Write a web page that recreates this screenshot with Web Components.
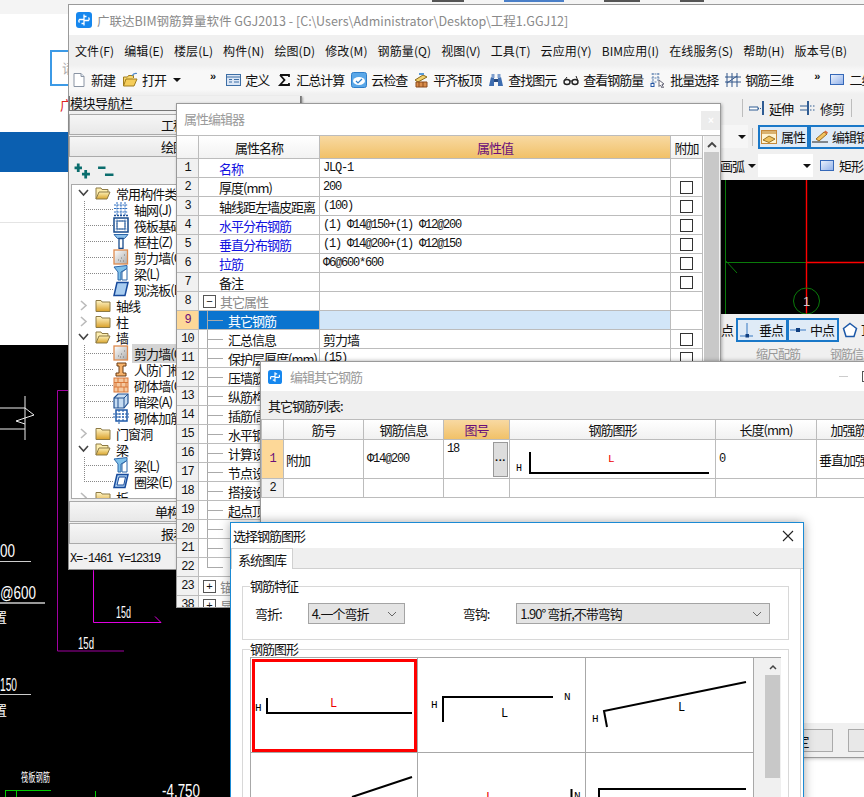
<!DOCTYPE html>
<html lang="zh">
<head>
<meta charset="utf-8">
<title>GGJ2013</title>
<style>
  body { margin: 0; background: #fff; font-family: "Noto Sans CJK SC", "Liberation Sans", sans-serif; font-size: 12px; color: #111; }
</style>
</head>
<body>
<ggj-desk>
  <web-page></web-page>
  <cad-canvas></cad-canvas>
  <main-window></main-window>
  <nav-panel></nav-panel>
  <prop-editor></prop-editor>
  <rebar-dialog></rebar-dialog>
  <shape-dialog></shape-dialog>
</ggj-desk>

<script>
const ICONS = {
  logo: `<rect x="0" y="0" width="16" height="16" rx="3" fill="#1687ee"/><path d="M8 2.500v5H3.500a2 2 0 0 0 0 3M8 13.500v-5h4.500a2 2 0 0 0 0-3M8 4.500h2.500M8 11.500H5.500" fill="none" stroke="#fff" stroke-width="1.300"/>`,
  doc: `<path d="M3 1.500h7l3 3v10H3z" fill="#fff" stroke="#8a94a3"/><path d="M10 1.500v3h3" fill="#dfe6ef" stroke="#8a94a3"/>`,
  open: `<path d="M1.500 14V5h4l1-1.500h5V6" fill="#f7d76f" stroke="#a07c1e"/><path d="M1.500 14l2.500-7h11l-3 7z" fill="#f5cd5a" stroke="#a07c1e"/><path d="M10 4c1-2 3-3 5-2.500" fill="none" stroke="#4b86c8" stroke-width="1.200"/>`,
  define: `<rect x="1.500" y="2.500" width="14" height="11" fill="#dbe6f5" stroke="#3d6ea5"/><path d="M1.500 5h14M4 7.500h3M4 10h3M9 7.500h5M9 10h5" stroke="#3d6ea5"/>`,
  sigma: `<path d="M4 3h9v2M4 3l4.500 5L4 13h9v-2" fill="none" stroke="#111" stroke-width="1.800"/>`,
  cloud: `<rect x="0.500" y="0.500" width="15" height="15" rx="2" fill="#5aa7e8" stroke="#2f7ec9"/><ellipse cx="8" cy="9" rx="6" ry="4" fill="#fff"/><path d="M5 9l2 2 4-4" fill="none" stroke="#2f7ec9" stroke-width="1.200"/>`,
  level: `<path d="M2 8l8-5 4 2-9 5z" fill="#f2d06b" stroke="#8a6a1d"/><path d="M3 10h11v5H3z" fill="#d98c4a" stroke="#8a4a1d"/><path d="M6 10v5M10 10v5" stroke="#8a4a1d"/><rect x="6" y="1" width="5" height="2" fill="#5a9ad5"/>`,
  binoc: `<path d="M3 5l-2 9h5V6zM13 5l2 9h-5V6z" fill="#3e6db0"/><rect x="3.500" y="2" width="3" height="4" fill="#7f9fce"/><rect x="9.500" y="2" width="3" height="4" fill="#7f9fce"/><rect x="6" y="7" width="4" height="3" fill="#28497d"/>`,
  glasses: `<ellipse cx="4" cy="10" rx="3" ry="2.500" fill="none" stroke="#222" stroke-width="1.400"/><ellipse cx="12" cy="10" rx="3" ry="2.500" fill="none" stroke="#222" stroke-width="1.400"/><path d="M7 9h2M1 9l3-4M15 9l-2-5" stroke="#222"/>`,
  batch: `<path d="M1.500 2h9M1.500 6h9M1.500 10h6M3 1v13M8 1v8" stroke="#5a7fae" stroke-dasharray="2 1" fill="none"/><rect x="1" y="11.500" width="3" height="3" fill="#fff" stroke="#2456a5"/><path d="M9 8l5 4-2 .5 1.500 3-1.500.5-1.500-3-1.500 1.500z" fill="#fff" stroke="#667"/>`,
  rebar3d: `<path d="M2 1v14M7 1v14M12 1v14M0 5h16M0 10h16M2 11l10-7" stroke="#33578a" fill="none"/>`,
  rect2d: `<defs><linearGradient id="r" x1="0" y1="0" x2="1" y2="1"><stop offset="0" stop-color="#eef3fc"/><stop offset="1" stop-color="#8fb0ea"/></linearGradient></defs><rect x="1.500" y="2.500" width="13" height="10" fill="url(#r)" stroke="#3568b8"/>`,
  extend: `<path d="M0 7h9v3H0z" fill="#fff" stroke="#2f5c93"/><path d="M11 8.500h1M9 8.500h1" stroke="#2f5c93"/><rect x="13" y="1" width="2" height="14" fill="#2f5c93"/>`,
  trim: `<path d="M0 6h7M0 10h7M10 6h1.500M13 6h1.500M10 10h1.500M13 10h1.500" stroke="#2f5c93"/><rect x="7" y="1" width="2" height="14" fill="#2f5c93"/>`,
  attr: `<rect x="0.500" y="1.500" width="15" height="13" fill="#fff3d0" stroke="#c78a3a"/><rect x="1" y="2" width="14" height="3" fill="#d9b26f"/><path d="M2 11l6-4 6 3-6 3.500z" fill="#f0c25e" stroke="#9a7326"/>`,
  pencil: `<path d="M0 13h16" stroke="#222"/><path d="M4 10l8-7 3 2-8 7z" fill="#f2c25e" stroke="#9a6b1e"/><path d="M12 3l1.500-1.500 2.500 2-1 1.500z" fill="#d96a3a"/>`,
  perp: `<path d="M8 1v14M1 14h13" stroke="#6f9ed4" stroke-width="1.500"/><rect x="6.500" y="12" width="3.500" height="3.500" fill="#103f80"/>`,
  mid: `<path d="M0 8h16" stroke="#6f9ed4" stroke-width="1.500"/><rect x="6" y="6" width="4" height="4" fill="#103f80"/>`,
  penta: `<path d="M8 1.500l6.500 5-2.500 8H4l-2.500-8z" fill="#fff" stroke="#1c58a8" stroke-width="1.500"/>`,
  folderOpen: `<defs><linearGradient id="f" x1="0" y1="0" x2="0" y2="1"><stop offset="0" stop-color="#fdf0b5"/><stop offset="1" stop-color="#d9a52e"/></linearGradient></defs><path d="M1 14V3h5l1 1.500h6V7" fill="#fdeeb0" stroke="#8d7a45"/><path d="M1 14l3-7h11l-3 7z" fill="url(#f)" stroke="#8d7a45"/>`,
  folder: `<defs><linearGradient id="f" x1="0" y1="0" x2="0" y2="1"><stop offset="0" stop-color="#fff6c8"/><stop offset="1" stop-color="#d9a029"/></linearGradient></defs><path d="M1 14.500V3.500h5l1 1.500h8v9.500z" fill="url(#f)" stroke="#8d7a45"/>`,
  grid: `<path d="M1 4h14M1 7.500h14M1 11h14M4 1v14M8 1v14M12 1v14" stroke="#2f6fc0" fill="none" stroke-dasharray="2 .8"/><path d="M1 14.500h14" stroke="#1c4f96" stroke-width="1.500" stroke-dasharray="2 1"/>`,
  raft: `<rect x="1" y="1" width="14" height="14" fill="#fff" stroke="#174a8b" stroke-width="1.500"/><rect x="4" y="4" width="8" height="8" fill="#fff" stroke="#174a8b"/><path d="M1 4h14M1 12h14M4 1v14M12 1v14" stroke="#4f7fb8" stroke-dasharray="1.500 1"/>`,
  column: `<path d="M1 1.500h14l-3.500 4h-7z" fill="#8ec0ea" stroke="#2c66a8"/><path d="M6 5.500h4v10H6z" fill="#fff" stroke="#174a8b" stroke-width="1.300"/>`,
  shear: `<defs><linearGradient id="s" x1="0" y1="0" x2="1" y2="1"><stop offset="0" stop-color="#fff"/><stop offset="1" stop-color="#aaa"/></linearGradient></defs><rect x="1" y="1" width="13.500" height="14" fill="url(#s)" stroke="#dd8a4e" stroke-width="1.300"/><path d="M5 11h1M8 9h1M10 12h1M11 6h1M7 12h1" stroke="#777"/>`,
  beam: `<path d="M1 2l13-1.500v3L8 7v8H5V7z" fill="#7fc0ea" stroke="#2c66a8"/><path d="M9 7l5-3.500V15H9z" fill="#fff" stroke="#2c66a8"/>`,
  slab: `<path d="M4 1.500h11l-3 13H1z" fill="#a9cdf0" stroke="#174a9b" stroke-width="1.500"/>`,
  door: `<path d="M4 2h9v3h-3v7h3v3H3v-3h3V5H4z" fill="#f6b26b" stroke="#6b3a12"/>`,
  brick: `<rect x="1" y="1" width="14" height="14" fill="#f5c9a0" stroke="#d9793a"/><path d="M1 5.500h14M1 10h14M5 1v4.500M11 1v4.500M8 5.500V10M3 5.500V10M13 5.500V10M5 10v5M11 10v5" stroke="#d9793a"/>`,
  darkbeam: `<path d="M1 5l4-4h10v9l-4 5H1z" fill="#c6dcf2" stroke="#22508f" stroke-width="1.200"/><path d="M1 5h10v10M11 5l4-4M5 5v10" fill="none" stroke="#22508f"/>`,
  masonry: `<rect x="3" y="1" width="11" height="11" fill="#fff" stroke="#1c58a8" stroke-width="1.500"/><path d="M0 5h16M0 8h16M6 1v15M10 1v11" stroke="#1c58a8" stroke-dasharray="2 1"/>`,
  ring: `<path d="M4 1.500h11l-3 13H1z" fill="#a9cdf0" stroke="#174a9b" stroke-width="1.500"/><path d="M6 4h6.500l-1.700 8H4z" fill="#fff" stroke="#174a9b"/>`,
  plus: `<path d="M4 0.500v8M0.500 4.500h7M11 6.500v8M7.500 10.500h7.500" stroke="#0a6d6d" stroke-width="2.600" fill="none"/>`,
  minus: `<path d="M1 4.500h7M7.500 11h8" stroke="#0a6d6d" stroke-width="2.400" fill="none"/>`
};

class UiIcon extends HTMLElement {
  connectedCallback() {
    const size = this.getAttribute("size") || 16;
    this.attachShadow({ mode: "open" });
    this.shadowRoot.innerHTML = `
    <style>:host { display:inline-flex; flex:none; width:${size}px; height:${size}px; } svg { display:block; }</style>
    <svg width="${size}" height="${size}" viewBox="0 0 16 16">${ICONS[this.getAttribute("name")] || ""}</svg>`;
  }
}

class ToolBtn extends HTMLElement {
  connectedCallback() {
    this.attachShadow({ mode: "open" });
    this.shadowRoot.innerHTML = `
    <style>
    :host { display:inline-flex; align-items:center; gap:4px; white-space:nowrap; font-size:13px; letter-spacing:-1px; flex:none; }
    :host([active]) { background:#dfebf7; border:2px solid #1a78c8; box-sizing:border-box; padding:0 2px 0 1px; height:24px; overflow:hidden; }
    </style>
    <ui-icon name="${this.getAttribute("icon")}"></ui-icon><slot></slot>`;
  }
}

class ComboArrow extends HTMLElement {
  constructor() {
    super();
    this.attachShadow({ mode: "open" });
    this.shadowRoot.innerHTML = `<style>:host { display:inline-block; flex:none; width:0; height:0; border:4px solid transparent; border-top-color:#111; border-bottom:0; }</style>`;
  }
}

class WebPage extends HTMLElement {
  constructor() {
    super();
    this.attachShadow({ mode: "open" });
    this.shadowRoot.innerHTML = `
    <style>
    :host { position:absolute; left:0; top:0; width:864px; height:345px; background:#fff; overflow:hidden; }
    .top { height:14px; background:#f4f4f4; display:flex; gap:40px; padding-left:432px; }
    .top span { height:2px; background:#555; }
    .search { margin:36px 0 0 50px; height:36px; width:40px; border:2px solid #3c9ae6; box-sizing:border-box; color:#aaa; font-size:13px; line-height:32px; padding-left:10px; white-space:nowrap; overflow:hidden; }
    .band { margin-top:46px; height:40px; background:#0b5fb0; }
    .rule { margin-top:50px; height:1px; background:#e4e4e4; }
    .ad { position:absolute; left:60px; top:95px; color:#d22; font-size:13px; }
    </style>
    <div class="top"><span style="width:32px"></span><span style="width:60px;background:#4a7fc8"></span><span style="width:36px"></span><span style="width:24px"></span></div>
    <div class="search">请输入</div>
    <div class="band"></div>
    <div class="rule"></div>
    <span class="ad">广</span>`;
  }
}

class CadCanvas extends HTMLElement {
  constructor() {
    super();
    this.attachShadow({ mode: "open" });
    this.shadowRoot.innerHTML = `
    <style>
    :host { position:absolute; left:0; top:345px; width:300px; height:452px; background:#000; }
    svg { display:block; font-family:"Liberation Sans","Noto Sans CJK SC",sans-serif; }
    text { fill:#fff; }
    </style>
    <svg width="300" height="452" viewBox="0 345 300 452" fill="none">
      <path d="M25 396v44M0 408h25M0 429h25M25 408l9 7-18 6 9 3" stroke="#eee"/>
      <path d="M68 390.500H57.500V651H124" stroke="#a000a0"/>
      <path d="M93.500 569v53.500H161l-6-6" stroke="#e000e0"/>
      <path d="M0 561.500h31M0 694.500h31" stroke="#ccc"/>
      <path d="M0 603h45" stroke="#999" stroke-width="2"/>
      <text x="0" y="557" font-size="18" textLength="15" lengthAdjust="spacingAndGlyphs">00</text>
      <text x="0" y="599" font-size="18" textLength="36" lengthAdjust="spacingAndGlyphs">@600</text>
      <text x="-6" y="622" font-size="13">置</text>
      <text x="0" y="691" font-size="18" textLength="17" lengthAdjust="spacingAndGlyphs">150</text>
      <text x="-6" y="715" font-size="13">置</text>
      <text x="116" y="618" font-size="17" textLength="15" lengthAdjust="spacingAndGlyphs">15d</text>
      <text x="78" y="649" font-size="17" textLength="16" lengthAdjust="spacingAndGlyphs">15d</text>
      <text x="21" y="782" font-size="12" textLength="29" lengthAdjust="spacingAndGlyphs">筏板钢筋</text>
      <text x="162" y="797" font-size="19" textLength="38" lengthAdjust="spacingAndGlyphs">-4.750</text>
      <path d="M5 790.500h46M5.500 790v8M16.500 790v8M95.500 791v7" stroke="#0c0"/>
    </svg>`;
  }
}

class MainWindow extends HTMLElement {
  constructor() {
    super();
    this.attachShadow({ mode: "open" });
    this.shadowRoot.innerHTML = `
    <style>
    :host { position:absolute; left:68px; top:4px; width:800px; height:360px; background:#f0f0f0; border:1px solid #9a9a9a; box-sizing:border-box; display:flex; flex-direction:column; overflow:hidden; }
    .title { height:30px; flex:none; background:#fff; display:flex; align-items:center; gap:5px; padding-left:7px; color:#8a8a8a; font-size:12.500px; white-space:nowrap; }
    .menu { height:30px; flex:none; display:flex; align-items:center; gap:10px; padding-left:6px; font-size:12px; letter-spacing:.1px; white-space:nowrap; }
    .bar { height:29px; flex:none; display:flex; align-items:center; gap:7px; padding-left:2px; white-space:nowrap; background:linear-gradient(#f0f0f0,#f8f8f8 20%,#f8f8f8 85%,#f0f0f0); }
    .more { font:bold 11px "Liberation Sans",sans-serif; margin-top:-8px; }
    .tb2 { margin-left:2px; }
    .row { flex:none; display:flex; align-items:center; padding-left:651px; gap:4px; white-space:nowrap; font-size:13px; letter-spacing:-1px; }
    .sep { width:1px; height:18px; background:#bdbdbd; flex:none; }
    .combo { background:#fff; height:23px; display:flex; align-items:center; justify-content:flex-end; padding-right:2px; box-sizing:border-box; flex:none; }
    .canvas { flex:none; height:134px; margin-left:652px; background:#000; }
    .canvas svg { display:block; }
    .faint { color:#999; }
    </style>
    <div class="title"><ui-icon name="logo"></ui-icon><span>广联达BIM钢筋算量软件 GGJ2013 - [C:\\Users\\Administrator\\Desktop\\工程1.GGJ12]</span></div>
    <div class="menu">
      <span>文件(F)</span><span>编辑(E)</span><span>楼层(L)</span><span>构件(N)</span><span>绘图(D)</span><span>修改(M)</span><span>钢筋量(Q)</span><span>视图(V)</span><span>工具(T)</span><span>云应用(Y)</span><span>BIM应用(I)</span><span>在线服务(S)</span><span>帮助(H)</span><span>版本号(B)</span>
    </div>
    <div class="bar">
      <tool-btn icon="doc">新建</tool-btn><tool-btn icon="open">打开</tool-btn><combo-arrow></combo-arrow>
      <span class="more" style="margin-left:22px">»</span>
      <tool-btn class="tb2" icon="define">定义</tool-btn><tool-btn icon="sigma">汇总计算</tool-btn><tool-btn icon="cloud">云检查</tool-btn><tool-btn icon="level" style="margin-left:-1px">平齐板顶</tool-btn><tool-btn icon="binoc">查找图元</tool-btn><tool-btn icon="glasses">查看钢筋量</tool-btn><tool-btn icon="batch">批量选择</tool-btn><tool-btn icon="rebar3d">钢筋三维</tool-btn>
      <span class="more" style="margin-left:14px">»</span>
      <tool-btn class="tb2" icon="rect2d">二维</tool-btn>
    </div>
    <div class="row" style="height:28px"><span style="margin:0 18px 0 -24px">旋转</span><span class="sep"></span><tool-btn icon="extend" style="margin-left:2px">延伸</tool-btn><tool-btn icon="trim" style="margin-left:3px">修剪</tool-btn><span class="sep" style="margin-left:3px"></span></div>
    <div class="row" style="height:29px"><div class="combo" style="width:28px;background:#f6f6f6"><combo-arrow></combo-arrow></div><span class="sep"></span><tool-btn active icon="attr" style="margin-left:1px;width:51px">属性</tool-btn><tool-btn active icon="pencil" style="margin-left:-4px;width:70px">编辑钢筋</tool-btn></div>
    <div class="row" style="height:29px"><span>画弧</span><combo-arrow></combo-arrow><div class="combo" style="width:55px;margin-left:-2px"><combo-arrow></combo-arrow></div><tool-btn icon="rect2d" style="margin-left:2px">矩形</tool-btn></div>
    <div class="canvas">
      <svg width="148" height="134" viewBox="721 180 148 134" fill="none">
        <path d="M725.500 180v134M725 262.500h81M725 260l12 13" stroke="#0a7a0a"/>
        <path d="M806.500 180v134M806 262.500h62" stroke="#f00" stroke-width="1.400"/>
        <circle cx="806.500" cy="301" r="13" stroke="#0a7a0a"/>
        <text x="803" y="306" font-size="13" fill="#ccc" font-family="Liberation Sans">1</text>
      </svg>
    </div>
    <div class="row" style="height:31px;padding-left:652px;gap:0"><span style="margin-right:3px">点</span><tool-btn active icon="perp" style="width:52px">垂点</tool-btn><tool-btn active icon="mid" style="width:52px;margin-left:-1px">中点</tool-btn><ui-icon name="penta" style="margin-left:3px"></ui-icon><span style="margin-left:3px">顶</span></div>
    <div class="row faint" style="height:16px;padding-left:687px;gap:4px;align-items:flex-start;font-size:12px"><span>缩尺配筋</span><span style="margin-left:26px">钢筋信息</span></div>`;
  }
}

class TreeItem extends HTMLElement {
  connectedCallback() {
    const level = this.getAttribute("level") || "0";
    const toggle = this.getAttribute("toggle");
    const arrow = toggle === "open"
      ? `<svg width="11" height="8" viewBox="0 0 11 8"><path d="M1 1l4.500 5L10 1" fill="none" stroke="#444" stroke-width="1.600"/></svg>`
      : toggle === "closed"
      ? `<svg width="8" height="11" viewBox="0 0 8 11"><path d="M1 1l5 4.500L1 10" fill="none" stroke="#bbb" stroke-width="1.600"/></svg>`
      : "";
    this.attachShadow({ mode: "open" });
    this.shadowRoot.innerHTML = `
    <style>
    :host { display:flex; align-items:center; height:16px; white-space:nowrap; font-size:13px; letter-spacing:-.9px; }
    .tog { width:23px; flex:none; display:flex; justify-content:center; }
    .c { flex:none; height:16px; width:29px; margin-left:12px;
      background:
        repeating-linear-gradient(#888 0 1px,transparent 1px 2px) 0 0 / 1px ${this.hasAttribute("last") ? "9px" : "16px"} no-repeat,
        repeating-linear-gradient(90deg,#888 0 1px,transparent 1px 2px) 0 8px / 100% 1px no-repeat; }
    ui-icon { margin-right:5px; }
    :host([selected]) .t { background:#d4d4d4; padding:0 30px 0 2px; margin-left:-2px; }
    </style>
    ${level === "1" ? `<div class="c"></div>` : `<div class="tog">${arrow}</div>`}
    <ui-icon name="${this.getAttribute("icon")}"></ui-icon><span class="t"><slot></slot></span>`;
  }
}

class NavPanel extends HTMLElement {
  constructor() {
    super();
    this.attachShadow({ mode: "open" });
    this.shadowRoot.innerHTML = `
    <style>
    :host { position:absolute; left:68px; top:96px; width:234px; height:474px; background:#f0f0f0; border:1px solid #8a8a8a; border-top:0; box-sizing:border-box; display:flex; flex-direction:column; box-shadow:1px 1px 2px rgba(0,0,0,.3); }
    .head { height:15px; flex:none; border:1px solid #777; border-top:0; box-sizing:border-box; font-size:13px; line-height:13px; white-space:nowrap; letter-spacing:-.5px; }
    .btn { height:21px; flex:none; display:flex; align-items:center; justify-content:center; border:1px solid #aaa; margin-bottom:1px; background:linear-gradient(#f6f6f6,#e8e8e8); font-size:13px; letter-spacing:-1px; box-sizing:border-box; }
    .tools { height:26px; flex:none; display:flex; align-items:center; gap:6px; padding-left:5px; }
    .tree { height:315px; flex:none; margin-left:2px; background:#fff; border:1px solid #aaa; overflow:hidden; box-sizing:border-box; }
    .status { flex:1; display:flex; align-items:center; padding:3px 0 0 1px; font:12px "Liberation Mono",monospace; letter-spacing:-1.200px; word-spacing:0; white-space:pre; }
    </style>
    <div class="head">模块导航栏</div>
    <div style="height:3px;flex:none"></div>
    <div class="btn">工程设置</div>
    <div class="btn">绘图输入</div>
    <div class="tools"><ui-icon name="plus" size="17"></ui-icon><ui-icon name="minus" size="17"></ui-icon></div>
    <div class="tree">
      <tree-item toggle="open" icon="folderOpen">常用构件类型</tree-item>
      <tree-item level="1" icon="grid">轴网(J)</tree-item>
      <tree-item level="1" icon="raft">筏板基础(M)</tree-item>
      <tree-item level="1" icon="column">框柱(Z)</tree-item>
      <tree-item level="1" icon="shear">剪力墙(Q)</tree-item>
      <tree-item level="1" icon="beam">梁(L)</tree-item>
      <tree-item level="1" last icon="slab">现浇板(B)</tree-item>
      <tree-item toggle="closed" icon="folder">轴线</tree-item>
      <tree-item toggle="closed" icon="folder">柱</tree-item>
      <tree-item toggle="open" icon="folderOpen">墙</tree-item>
      <tree-item level="1" selected icon="shear">剪力墙(Q)</tree-item>
      <tree-item level="1" icon="door">人防门框墙</tree-item>
      <tree-item level="1" icon="brick">砌体墙(Q)</tree-item>
      <tree-item level="1" icon="darkbeam">暗梁(A)</tree-item>
      <tree-item level="1" last icon="masonry">砌体加筋(Y)</tree-item>
      <tree-item toggle="closed" icon="folder">门窗洞</tree-item>
      <tree-item toggle="open" icon="folderOpen">梁</tree-item>
      <tree-item level="1" icon="beam">梁(L)</tree-item>
      <tree-item level="1" last icon="ring">圈梁(E)</tree-item>
      <tree-item toggle="closed" icon="folder">板</tree-item>
    </div>
    <div style="height:2px;flex:none"></div>
    <div class="btn">单构件输入</div>
    <div class="btn">报表预览</div>
    <div class="status">X=-1461 Y=12319</div>`;
  }
}

class PropRow extends HTMLElement {
  connectedCallback() {
    const name = this.getAttribute("name") || "";
    const value = this.getAttribute("value") || "";
    const tog = this.getAttribute("toggle");
    const tree = this.getAttribute("tree");
    this.attachShadow({ mode: "open" });
    this.shadowRoot.innerHTML = `
    <style>
    :host { display:grid; grid-template-columns:22px 121px 351px 32px; height:19px; box-sizing:border-box; border-bottom:1px solid #bcbcbc; white-space:nowrap; overflow:hidden; font-size:13px; letter-spacing:-1px; }
    .n,.k,.v,.a { border-right:1px solid #bcbcbc; display:flex; align-items:center; overflow:hidden; }
    .n { justify-content:center; background:#f1f1f1; font:12px "Liberation Mono",monospace; letter-spacing:-1px; }
    .k { padding-left:20px; }
    .v { padding-left:3px; font:12px "Liberation Mono","Noto Sans CJK SC",monospace; letter-spacing:-1.200px; }
    .v.cjk { font:13px "Noto Sans CJK SC",sans-serif; letter-spacing:-1px; }
    .a { justify-content:center; }
    .box { width:11px; height:11px; border:1px solid #333; background:#fff; }
    :host([blue]) .k { color:#1212e0; }
    :host([muted]) .k { color:#8a8a8a; }
    :host([sel]) .n { background:#fdd898; color:#6a0f7a; }
    :host([sel]) .k { background:#0a74cf; color:#fff; }
    :host([sel]) .v { background:#d2e6f8; }
    .tg { width:11px; height:11px; border:1px solid #555; margin:0 4px 0 -16px; background:#fff; color:#111; font:11px/10px "Liberation Sans",sans-serif; text-align:center; letter-spacing:0; flex:none; }
    .tl { width:16px; height:19px; flex:none; margin:0 5px 0 -12px;
      background:linear-gradient(#aaa,#aaa) 0 0 / 1px ${tree === "end" ? "10px" : "100%"} no-repeat, linear-gradient(#aaa,#aaa) 0 9px / 100% 1px no-repeat; }
    </style>
    <div class="n">${this.getAttribute("num")}</div>
    <div class="k">${tog ? `<span class="tg">${tog}</span>` : ""}${tree ? `<span class="tl"></span>` : ""}${name}</div>
    <div class="v ${this.hasAttribute("cjk") ? "cjk" : ""}">${value}</div>
    <div class="a">${this.hasAttribute("check") ? `<span class="box"></span>` : ""}</div>`;
  }
}

class PropEditor extends HTMLElement {
  constructor() {
    super();
    this.attachShadow({ mode: "open" });
    this.shadowRoot.innerHTML = `
    <style>
    :host { position:absolute; left:176px; top:103px; width:545px; height:505px; background:#fff; border:1px solid #9a9a9a; box-sizing:border-box; display:flex; flex-direction:column; box-shadow:1px 1px 3px rgba(0,0,0,.3); overflow:hidden; }
    .title { height:31px; flex:none; display:flex; align-items:center; justify-content:space-between; padding:0 0 3px 7px; box-sizing:border-box; color:#9a9a9a; font-size:13px; letter-spacing:-1px; }
    .close { width:19px; height:19px; margin:4px 0 0; background:#ececec; color:#fff; display:flex; align-items:center; justify-content:center; font:bold 10px "Liberation Sans",sans-serif; }
    .body { flex:1; display:flex; overflow:hidden; border-top:1px solid #bcbcbc; }
    .table { width:526px; flex:none; }
    .head { display:grid; grid-template-columns:22px 121px 351px 32px; height:23px; box-sizing:border-box; border-bottom:1px solid #bcbcbc; font-size:13px; letter-spacing:-1px; }
    .head div { display:flex; align-items:center; justify-content:center; border-right:1px solid #bcbcbc; background:linear-gradient(#fff,#f2f2f2); }
    .head .on { background:linear-gradient(#f8d9a2,#f1c168); color:#6a0f7a; }
    .scroll { flex:1; margin-left:1px; background:#f0f0f0; display:flex; flex-direction:column; }
    .up { height:16px; display:flex; align-items:center; justify-content:center; }
    .thumb { flex:1; background:#c8c8c8; margin-right:1px; }
    </style>
    <div class="title"><span>属性编辑器</span><span class="close">×</span></div>
    <div class="body">
      <div class="table">
        <div class="head"><div></div><div>属性名称</div><div class="on">属性值</div><div>附加</div></div>
        <prop-row num="1" name="名称" value="JLQ-1" blue></prop-row>
        <prop-row num="2" name="厚度(mm)" value="200" check></prop-row>
        <prop-row num="3" name="轴线距左墙皮距离" value="(100)" check></prop-row>
        <prop-row num="4" name="水平分布钢筋" value="(1) Φ14@150+(1) Φ12@200" blue check></prop-row>
        <prop-row num="5" name="垂直分布钢筋" value="(1) Φ14@200+(1) Φ12@150" blue check></prop-row>
        <prop-row num="6" name="拉筋" value="Φ6@600*600" blue check></prop-row>
        <prop-row num="7" name="备注" value="" check></prop-row>
        <prop-row num="8" name="其它属性" toggle="−" muted></prop-row>
        <prop-row num="9" name="其它钢筋" tree="mid" sel></prop-row>
        <prop-row num="10" name="汇总信息" tree="mid" value="剪力墙" cjk check></prop-row>
        <prop-row num="11" name="保护层厚度(mm)" tree="mid" value="(15)" check></prop-row>
        <prop-row num="12" name="压墙筋" tree="mid"></prop-row>
        <prop-row num="13" name="纵筋构造" tree="mid"></prop-row>
        <prop-row num="14" name="插筋信息" tree="mid"></prop-row>
        <prop-row num="15" name="水平钢筋" tree="mid"></prop-row>
        <prop-row num="16" name="计算设置" tree="mid"></prop-row>
        <prop-row num="17" name="节点设置" tree="mid"></prop-row>
        <prop-row num="18" name="搭接设置" tree="mid"></prop-row>
        <prop-row num="19" name="起点顶标高" tree="mid"></prop-row>
        <prop-row num="20" name="" tree="mid"></prop-row>
        <prop-row num="21" name="" tree="mid"></prop-row>
        <prop-row num="22" name="" tree="end"></prop-row>
        <prop-row num="23" name="锚固搭接" toggle="+" muted></prop-row>
        <prop-row num="38" name="显示样式" toggle="+" muted></prop-row>
      </div>
      <div class="scroll">
        <div class="up"><svg width="10" height="7" viewBox="0 0 10 7"><path d="M1 6l4-4 4 4" fill="none" stroke="#444" stroke-width="1.800"/></svg></div>
        <div class="thumb"></div>
      </div>
    </div>`;
  }
}

class RebarDialog extends HTMLElement {
  constructor() {
    super();
    this.attachShadow({ mode: "open" });
    this.shadowRoot.innerHTML = `
    <style>
    :host { position:absolute; left:260px; top:361px; width:620px; height:397px; background:#fff; border:1px solid #9a9a9a; box-sizing:border-box; display:flex; flex-direction:column; box-shadow:0 0 4px rgba(0,0,0,.35); font-size:13px; letter-spacing:-1px; overflow:hidden; }
    .title { height:29px; flex:none; display:flex; align-items:center; gap:7px; padding-left:7px; color:#9a9a9a; white-space:nowrap; }
    .winbtn { margin-left:470px; width:9px; height:1px; background:#ccc; flex:none; }
    .winbtn2 { margin-left:7px; width:9px; height:9px; border:1px solid #555; flex:none; }
    .label { height:28px; flex:none; background:#efefef; display:flex; align-items:center; padding-left:7px; }
    .grid { flex:none; display:grid; grid-template-columns:22px 80px 80px 66px 206px 101px 64px; grid-template-rows:20px 39px 19px; border-top:1px solid #bcbcbc; border-left:1px solid #bcbcbc; }
    .grid > div { border-right:1px solid #bcbcbc; border-bottom:1px solid #bcbcbc; display:flex; align-items:center; white-space:nowrap; overflow:hidden; box-sizing:border-box; }
    .h { justify-content:center; background:linear-gradient(#fff,#f1f1f1); }
    .h.on { background:linear-gradient(#f8d9a2,#f1c168); color:#6a0f7a; }
    .rn { justify-content:center; background:#f1f1f1; font:12px "Liberation Mono",monospace; }
    .rn.on { background:#fdd898; color:#6a0f7a; }
    .mono { font:12px "Liberation Mono",monospace; letter-spacing:-1.200px; padding-left:3px; }
    .pick { padding:2px 1px 2px 3px; align-items:flex-start !important; justify-content:space-between; }
    .dots { width:15px; height:35px; background:#ddd; border:1px solid #999; box-sizing:border-box; display:flex; align-items:center; justify-content:center; font:bold 11px "Liberation Sans",sans-serif; letter-spacing:0; }
    .fill { flex:1; }
    .foot { height:34px; flex:none; background:#f0f0f0; display:flex; align-items:center; gap:15px; padding-left:499px; }
    .b { width:73px; height:23px; background:#e8e8e8; border:1px solid #aaa; box-sizing:border-box; display:flex; align-items:center; justify-content:center; flex:none; }
    svg text { font-family:"Liberation Mono",monospace; letter-spacing:0; }
    </style>
    <div class="title"><ui-icon name="logo" size="14"></ui-icon><span style="margin-left:1px">编辑其它钢筋</span><span class="winbtn"></span><span class="winbtn2"></span></div>
    <div class="label">其它钢筋列表:</div>
    <div class="grid">
      <div class="h"></div><div class="h">筋号</div><div class="h">钢筋信息</div><div class="h on">图号</div><div class="h">钢筋图形</div><div class="h">长度(mm)</div><div class="h">加强筋</div>
      <div class="rn on">1</div><div style="padding-left:2px">附加</div><div class="mono">Φ14@200</div><div class="mono pick"><span>18</span><span class="dots">···</span></div>
      <div><svg width="205" height="38" viewBox="510 439 205 38" fill="none"><path d="M530 451v21h179" stroke="#000" stroke-width="2"/><text x="516" y="470" font-size="10" fill="#000">H</text><text x="608" y="461" font-size="11" fill="#e00">L</text></svg></div>
      <div class="mono">0</div><div style="padding-left:2px">垂直加强筋</div>
      <div class="rn">2</div><div></div><div></div><div></div><div></div><div></div><div></div>
    </div>
    <div class="fill"></div>
    <div class="foot"><span class="b">确定</span><span class="b">取消</span></div>`;
  }
}

class ComboBox extends HTMLElement {
  constructor() {
    super();
    this.attachShadow({ mode: "open" });
    this.shadowRoot.innerHTML = `
    <style>
    :host { display:flex; flex:none; align-items:center; justify-content:space-between; height:21px; box-sizing:border-box; background:#e4e4e4; border:1px solid #a4a4a4; padding:0 7px 0 3px; font-size:13px; letter-spacing:-1px; white-space:nowrap; }
    </style>
    <slot></slot>
    <svg width="10" height="6" viewBox="0 0 10 6"><path d="M1 1l4 4 4-4" fill="none" stroke="#666"/></svg>`;
  }
}

class ShapeCell extends HTMLElement {
  constructor() {
    super();
    this.attachShadow({ mode: "open" });
    this.shadowRoot.innerHTML = `
    <style>
    :host { display:block; box-sizing:border-box; border-right:1px solid #a8a8a8; border-bottom:1px solid #a8a8a8; overflow:hidden; background:#fff; }
    :host([picked]) { outline:3px solid #f00; outline-offset:-4px; }
    ::slotted(svg) { display:block; }
    </style>
    <slot></slot>`;
  }
}

class ShapeDialog extends HTMLElement {
  constructor() {
    super();
    this.attachShadow({ mode: "open" });
    this.shadowRoot.innerHTML = `
    <style>
    :host { position:absolute; left:230px; top:522px; width:574px; height:290px; background:#fff; border:1px solid #1a8ad4; box-sizing:border-box; display:flex; flex-direction:column; box-shadow:0 0 10px rgba(0,0,0,.35); font-size:13px; letter-spacing:-1px; overflow:hidden; }
    .title { height:25px; flex:none; display:flex; align-items:center; justify-content:space-between; padding:0 9px 0 2px; white-space:nowrap; }
    .tabs { height:20px; flex:none; background:#efefef; display:flex; border-bottom:1px solid #d0d0d0; box-sizing:content-box; }
    .tab { width:62px; background:#fff; border:1px solid #d0d0d0; border-bottom:0; display:flex; align-items:center; justify-content:center; height:21px; box-sizing:border-box; }
    .page { flex:1; margin-right:2px; border-right:1px solid #d0d0d0; padding:0 11px; }
    fieldset { margin:0; padding:0; border:1px solid #d8d8d8; min-width:0; }
    legend { padding:0; margin-left:7px; font-size:13px; letter-spacing:-1px; line-height:14px; background:#fff; }
    .opts { height:46px; display:flex; align-items:center; padding:0 0 5px 12px; box-sizing:border-box; }
    .gal { display:flex; align-items:stretch; margin-left:7px; margin-top:1px; }
    .cells { width:503px; display:grid; grid-template-columns:167px 168px 168px; grid-auto-rows:95px; border-top:1px solid #a8a8a8; border-left:1px solid #a8a8a8; }
    .scroll { width:27px; height:200px; background:#f0f0f0; border-top:1px solid #a8a8a8; display:flex; flex-direction:column; align-items:flex-end; box-sizing:border-box; }
    .up { width:16px; height:17px; display:flex; align-items:center; justify-content:center; }
    .thumb { width:15px; height:103px; background:#c8c8c8; margin-right:1px; }
    svg text { font-family:"Liberation Mono",monospace; letter-spacing:0; }
    </style>
    <div class="title"><span>选择钢筋图形</span><svg width="12" height="12" viewBox="0 0 12 12"><path d="M1 1l10 10M11 1L1 11" stroke="#222" stroke-width="1.100"/></svg></div>
    <div class="tabs"><span class="tab">系统图库</span></div>
    <div class="page">
      <fieldset style="margin-top:10px">
        <legend>钢筋特征</legend>
        <div class="opts">
          <span>弯折:</span><combo-box style="width:97px;margin-left:26px">4.一个弯折</combo-box>
          <span style="margin-left:58px">弯钩:</span><combo-box style="width:254px;margin-left:27px">1.90° 弯折,不带弯钩</combo-box>
        </div>
      </fieldset>
      <fieldset style="margin-top:2px">
        <legend>钢筋图形</legend>
        <div class="gal">
          <div class="cells">
            <shape-cell picked><svg width="166" height="94" viewBox="251 659 166 94" fill="none">
              <path d="M267 699v15h145" stroke="#000" stroke-width="2"/>
              <text x="255" y="712" font-size="11" fill="#000">H</text><text x="330" y="708" font-size="12" fill="#e00">L</text></svg></shape-cell>
            <shape-cell><svg width="167" height="94" viewBox="418 659 167 94" fill="none">
              <path d="M443 723v-25h110" stroke="#000" stroke-width="2"/>
              <text x="431" y="709" font-size="11" fill="#000">H</text><text x="501" y="718" font-size="12" fill="#000">L</text><text x="564" y="701" font-size="11" fill="#000">N</text></svg></shape-cell>
            <shape-cell><svg width="167" height="94" viewBox="586 659 167 94" fill="none">
              <path d="M746 683L604 712l3 16" stroke="#000" stroke-width="2"/>
              <text x="592" y="723" font-size="11" fill="#000">H</text><text x="678" y="712" font-size="12" fill="#000">L</text></svg></shape-cell>
            <shape-cell><svg width="166" height="94" viewBox="251 754 166 94" fill="none"><path d="M412 778l-60 20" stroke="#000" stroke-width="2"/></svg></shape-cell>
            <shape-cell><svg width="167" height="94" viewBox="418 754 167 94" fill="none"><text x="486" y="802" font-size="12" fill="#e00">L</text><path d="M571.500 790v10" stroke="#000" stroke-width="2"/><text x="574" y="800" font-size="11" fill="#000">N</text></svg></shape-cell>
            <shape-cell><svg width="167" height="94" viewBox="586 754 167 94" fill="none"><path d="M599 800v-10h147" stroke="#000" stroke-width="2"/></svg></shape-cell>
          </div>
          <div class="scroll">
            <div class="up"><svg width="8" height="6" viewBox="0 0 8 6"><path d="M1 5l3-3 3 3" fill="none" stroke="#444" stroke-width="1.500"/></svg></div>
            <div class="thumb"></div>
          </div>
        </div>
      </fieldset>
    </div>`;
  }
}

class GgjDesk extends HTMLElement {
  constructor() {
    super();
    this.attachShadow({ mode: "open" });
    this.shadowRoot.innerHTML = `
    <style>:host { display:block; position:relative; width:864px; height:797px; overflow:hidden; background:#fff; }</style>
    <slot></slot>`;
  }
}

window.customElements.define("ui-icon", UiIcon);
window.customElements.define("tool-btn", ToolBtn);
window.customElements.define("combo-arrow", ComboArrow);
window.customElements.define("combo-box", ComboBox);
window.customElements.define("web-page", WebPage);
window.customElements.define("cad-canvas", CadCanvas);
window.customElements.define("tree-item", TreeItem);
window.customElements.define("prop-row", PropRow);
window.customElements.define("shape-cell", ShapeCell);
window.customElements.define("main-window", MainWindow);
window.customElements.define("nav-panel", NavPanel);
window.customElements.define("prop-editor", PropEditor);
window.customElements.define("rebar-dialog", RebarDialog);
window.customElements.define("shape-dialog", ShapeDialog);
window.customElements.define("ggj-desk", GgjDesk);
</script>
</body>
</html>
